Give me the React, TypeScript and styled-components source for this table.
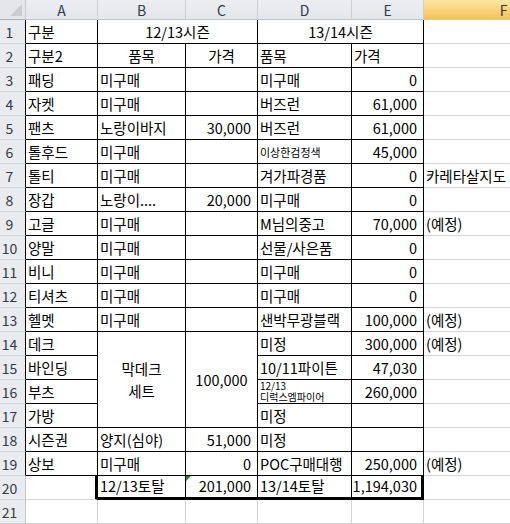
import React from 'react';
import styled, { createGlobalStyle } from 'styled-components';

const GlobalStyle = createGlobalStyle`
  html, body {
    margin: 0;
    padding: 0;
    background: #ffffff;
    overflow: hidden;
  }
  body {
    font-family: "Noto Sans CJK KR", "Noto Sans", sans-serif;
  }
`;

type Edge = 'g' | 'k' | 'K';
type Align = 'l' | 'c' | 'r';

const edgeWidth = (e: Edge) => (e === 'K' ? 3 : 1);
const edgeColor = (e: Edge) => (e === 'g' ? '#d4d4d4' : '#000000');

const COLS = [26, 72, 88, 72, 94, 72, 160];
const LETTERS = ['A', 'B', 'C', 'D', 'E', 'F'];

const Sheet = styled.div`
  display: grid;
  grid-template-columns: ${COLS.map((c) => `${c}px`).join(' ')};
  grid-template-rows: 20px repeat(21, 24px);
  width: 510px;
  height: 524px;
  overflow: hidden;
  font-family: "Noto Sans CJK KR", "Noto Sans", sans-serif;
  color: #000;
`;

const Corner = styled.div`
  grid-column: 1;
  grid-row: 1;
  box-sizing: border-box;
  background: #e4e6ea;
  border-right: 1px solid #c4c8ce;
  border-bottom: 1px solid #a9aeb5;
  position: relative;
  &::after {
    content: '';
    position: absolute;
    right: 3px;
    bottom: 3px;
    width: 0;
    height: 0;
    border-left: 12px solid transparent;
    border-bottom: 12px solid #c9cdd2;
  }
`;

const ColHeader = styled.div<{ $active?: boolean; $col: number }>`
  grid-column: ${(p) => p.$col};
  grid-row: 1;
  box-sizing: border-box;
  display: flex;
  align-items: center;
  justify-content: center;
  font-size: 14px;
  line-height: 18px;
  color: #333a44;
  background: ${(p) =>
    p.$active
      ? 'linear-gradient(#fbe6a8 0%, #f8d67e 45%, #f3c35a 100%)'
      : 'linear-gradient(#eceef1, #e3e6ea)'};
  border-right: 1px solid ${(p) => (p.$active ? '#e6b453' : '#c9cdd3')};
  border-bottom: 1px solid ${(p) => (p.$active ? '#f0c869' : '#c2c6cc')};
`;

const RowHeader = styled.div<{ $row: number; $edge: boolean }>`
  grid-column: 1;
  grid-row: ${(p) => p.$row + 1};
  box-sizing: border-box;
  display: flex;
  align-items: center;
  justify-content: center;
  padding-right: 6px;
  font-size: 14px;
  line-height: 18px;
  color: #333a44;
  background: #e9ebee;
  border-right: 1px solid ${(p) => (p.$edge ? '#000000' : '#c4c8ce')};
  border-bottom: 1px solid #cfd3d8;
`;

const Cell = styled.div<{
  $col: number;
  $row: number;
  $cs: number;
  $rs: number;
  $r: Edge;
  $b: Edge;
  $align: Align;
  $mid: boolean;
  $small: boolean;
  $top: boolean;
}>`
  grid-column: ${(p) => p.$col} / span ${(p) => p.$cs};
  grid-row: ${(p) => p.$row + 1} / span ${(p) => p.$rs};
  box-sizing: border-box;
  position: relative;
  display: flex;
  align-items: ${(p) => (p.$top ? 'flex-start' : p.$mid ? 'center' : 'flex-end')};
  justify-content: ${(p) =>
    p.$align === 'l' ? 'flex-start' : p.$align === 'c' ? 'center' : 'flex-end'};
  text-align: ${(p) => (p.$align === 'l' ? 'left' : p.$align === 'c' ? 'center' : 'right')};
  padding: 0 ${(p) => (p.$align === 'r' ? 7 - edgeWidth(p.$r) : 2)}px
    ${(p) => (p.$mid || p.$top ? 0 : 2)}px 2px;
  font-size: ${(p) => (p.$small ? '11px' : '14.5px')};
  line-height: ${(p) => (p.$mid ? '22px' : '18px')};
  white-space: nowrap;
  overflow: hidden;
  border-right: ${(p) => edgeWidth(p.$r)}px solid ${(p) => edgeColor(p.$r)};
  border-bottom: ${(p) => edgeWidth(p.$b)}px solid ${(p) => edgeColor(p.$b)};
`;

const StackedSmall = styled.div`
  display: flex;
  flex-direction: column;
  font-size: 10px;
  line-height: 11px;
  padding-top: 0;
`;

const ErrorMark = styled.span`
  position: absolute;
  top: 0;
  left: 0;
  width: 0;
  height: 0;
  border-top: 5px solid #1f8a2a;
  border-right: 5px solid transparent;
`;

interface CellDef {
  t?: React.ReactNode;
  a?: Align;
  cs?: number;
  rs?: number;
  r?: Edge;
  b?: Edge;
  mid?: boolean;
  small?: boolean;
  tri?: boolean;
  top?: boolean;
}

const L = (t: string): CellDef => ({ t, a: 'l' });
const R = (t: string): CellDef => ({ t, a: 'r' });
const E = (): CellDef => ({});

// rows 3..19 : [A, B, C, D, E, F]
const body: (CellDef | null)[][] = [
  [L('패딩'), L('미구매'), E(), L('미구매'), R('0'), E()],
  [L('자켓'), L('미구매'), E(), L('버즈런'), R('61,000'), E()],
  [L('팬츠'), L('노랑이바지'), R('30,000'), L('버즈런'), R('61,000'), E()],
  [L('톨후드'), L('미구매'), E(), { t: '이상한검정색', a: 'l', small: true }, R('45,000'), E()],
  [L('톨티'), L('미구매'), E(), L('겨가파경품'), R('0'), L('카레타살지도')],
  [L('장갑'), L('노랑이....'), R('20,000'), L('미구매'), R('0'), E()],
  [L('고글'), L('미구매'), E(), L('M님의중고'), R('70,000'), L('(예정)')],
  [L('양말'), L('미구매'), E(), L('선물/사은품'), R('0'), E()],
  [L('비니'), L('미구매'), E(), L('미구매'), R('0'), E()],
  [L('티셔츠'), L('미구매'), E(), L('미구매'), R('0'), E()],
  [L('헬멧'), L('미구매'), E(), L('샌박무광블랙'), R('100,000'), L('(예정)')],
  [
    L('데크'),
    {
      t: (
        <>
          막데크
          <br />
          세트
        </>
      ),
      a: 'c',
      rs: 4,
      mid: true,
    },
    { t: '100,000', a: 'c', rs: 4, mid: true },
    L('미정'),
    R('300,000'),
    L('(예정)'),
  ],
  [L('바인딩'), null, null, L('10/11파이튼'), R('47,030'), E()],
  [
    L('부츠'),
    null,
    null,
    {
      t: (
        <StackedSmall>
          <span>12/13</span>
          <span>디럭스엠파이어</span>
        </StackedSmall>
      ),
      a: 'l',
      top: true,
    },
    R('260,000'),
    E(),
  ],
  [L('가방'), null, null, L('미정'), E(), E()],
  [L('시즌권'), L('양지(심야)'), R('51,000'), L('미정'), E(), E()],
  [L('상보'), L('미구매'), R('0'), L('POC구매대행'), R('250,000'), L('(예정)')],
];

const buildRows = (): (CellDef | null)[][] => {
  const rows: (CellDef | null)[][] = [];
  rows.push([
    L('구분'),
    { t: '12/13시즌', a: 'c', cs: 2 },
    null,
    { t: '13/14시즌', a: 'c', cs: 2 },
    null,
    E(),
  ]);
  rows.push([L('구분2'), { t: '품목', a: 'c' }, { t: '가격', a: 'c' }, L('품목'), L('가격'), E()]);
  body.forEach((r) => rows.push(r));
  rows.forEach((r) =>
    r.forEach((c, i) => {
      if (c && i < 5) {
        c.r = c.r ?? 'k';
        c.b = c.b ?? 'k';
      }
    })
  );
  rows.push([
    { r: 'K', b: 'g' },
    { t: '12/13토탈', a: 'l', r: 'k', b: 'K' },
    { t: '201,000', a: 'r', r: 'k', b: 'K', tri: true },
    { t: '13/14토탈', a: 'l', r: 'k', b: 'K' },
    { t: '1,194,030', a: 'r', r: 'K', b: 'K' },
    E(),
  ]);
  rows.push([E(), E(), E(), E(), E(), E()]);
  return rows;
};

const rows = buildRows();

export default function App() {
  return (
    <>
      <GlobalStyle />
      <Sheet>
        <Corner />
        {LETTERS.map((l, i) => (
          <ColHeader key={l} $col={i + 2} $active={l === 'F'}>
            {l}
          </ColHeader>
        ))}
        {rows.map((r, ri) => (
          <React.Fragment key={ri}>
            <RowHeader $row={ri + 1} $edge={ri < 19}>
              {ri + 1}
            </RowHeader>
            {r.map((c, ci) =>
              c ? (
                <Cell
                  key={ci}
                  $col={ci + 2}
                  $row={ri + 1}
                  $cs={c.cs ?? 1}
                  $rs={c.rs ?? 1}
                  $r={c.r ?? 'g'}
                  $b={c.b ?? 'g'}
                  $align={c.a ?? 'l'}
                  $mid={!!c.mid}
                  $small={!!c.small}
                  $top={!!c.top}
                >
                  {c.tri && <ErrorMark />}
                  {c.t}
                </Cell>
              ) : null
            )}
          </React.Fragment>
        ))}
      </Sheet>
    </>
  );
}
